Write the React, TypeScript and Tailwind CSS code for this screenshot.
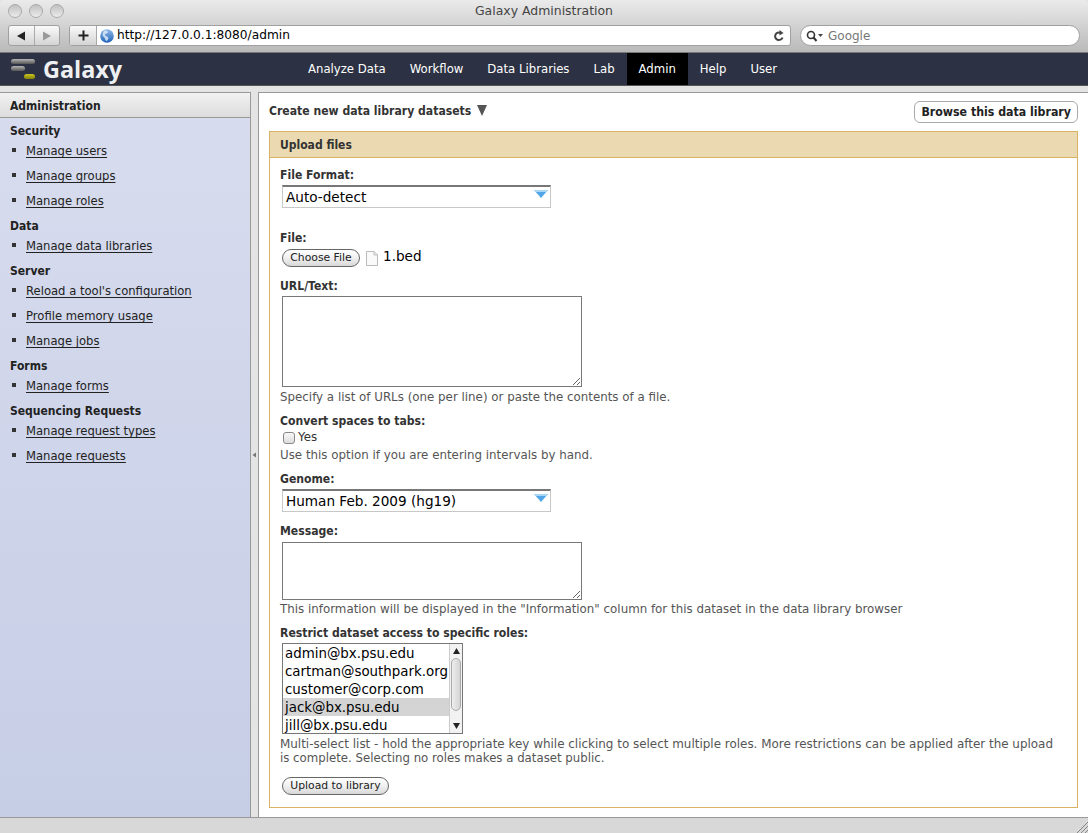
import React from "react";

const sidebar = [
  { title: "Security", links: ["Manage users", "Manage groups", "Manage roles"] },
  { title: "Data", links: ["Manage data libraries"] },
  { title: "Server", links: ["Reload a tool's configuration", "Profile memory usage", "Manage jobs"] },
  { title: "Forms", links: ["Manage forms"] },
  { title: "Sequencing Requests", links: ["Manage request types", "Manage requests"] },
];

const tabs = ["Analyze Data", "Workflow", "Data Libraries", "Lab", "Admin", "Help", "User"];

const roles = ["admin@bx.psu.edu", "cartman@southpark.org", "customer@corp.com", "jack@bx.psu.edu", "jill@bx.psu.edu"];

const Label = ({ children, className = "" }: { children: React.ReactNode; className?: string }) => (
  <div className={`h-[14px] text-[12.1px] leading-[14px] font-bold text-[#333] [font-family:'DejaVu_Sans_Condensed','DejaVu_Sans',sans-serif] ${className}`}>{children}</div>
);

const Help = ({ children, className = "" }: { children: React.ReactNode; className?: string }) => (
  <div className={`text-[11.85px] leading-[14px] text-[#555] ${className}`}>{children}</div>
);

// Safari style select with the blue arrow on the right
const FakeSelect = ({ value, className = "" }: { value: string; className?: string }) => (
  <div className={`relative ml-[2px] flex h-[23px] w-[269px] items-center border border-[#c8c8c8] border-t-2 border-t-[#777] pl-[3px] text-[13.6px] text-black ${className}`}>
    {value}
    <svg className="absolute right-[2px] top-[3px]" width="14" height="9" viewBox="0 0 14 9">
      <path d="M0 0H14L7 8Z" fill="#52a6e6" />
      <path d="M0 0H14L12.5 2H1.5Z" fill="#a9d6f5" />
    </svg>
  </div>
);

const AquaButton = ({ children, className = "" }: { children: React.ReactNode; className?: string }) => (
  <button className={`flex h-[18px] items-center justify-center rounded-full border border-[#666] bg-gradient-to-b from-white via-[#f0f0f0] to-[#d8d8d8] text-[10.8px] text-[#222] ${className}`}>
    {children}
  </button>
);

const TrafficLight = () => (
  <span className="h-[14px] w-[14px] rounded-full border border-[#aaa] bg-gradient-to-b from-[#c0c0c0] to-[#ececec]" />
);

export default function App() {
  return (
    <div className="flex h-[833px] w-[1088px] flex-col overflow-hidden bg-[#e4e4e4] text-[11.6px] [font-family:'DejaVu_Sans',sans-serif]">
      {/* browser chrome */}
      <div className="h-[52px] shrink-0 rounded-t-[5px] bg-gradient-to-b from-[#ebebeb] to-[#b9b9b9] px-2">
        <div className="relative flex h-[22px] items-center justify-center">
          <div className="absolute left-0 top-[4px] flex gap-[7px]">
            <TrafficLight />
            <TrafficLight />
            <TrafficLight />
          </div>
          <span className="text-[12.45px] text-[#444]">Galaxy Administration</span>
        </div>
        <div className="mt-[3px] flex h-[21px] items-center">
          <div className="flex h-[21px] w-[52px] rounded-[3px] border border-[#a0a0a0] bg-gradient-to-b from-[#fafafa] to-[#d4d4d4]">
            <div className="flex flex-1 items-center justify-center border-r border-[#a8a8a8]">
              <svg width="10" height="10" viewBox="0 0 10 10"><path d="M1 5L9 0.5V9.5Z" fill="#222" /></svg>
            </div>
            <div className="flex flex-1 items-center justify-center">
              <svg width="10" height="10" viewBox="0 0 10 10"><path d="M9 5L1 0.5V9.5Z" fill="#999" /></svg>
            </div>
          </div>
          <div className="ml-[9px] flex h-[21px] w-[722px] overflow-hidden rounded-[3px] border border-[#a0a0a0] bg-white">
            <div className="flex w-[27px] items-center justify-center border-r border-[#a8a8a8] bg-gradient-to-b from-[#fafafa] to-[#d4d4d4]">
              <svg width="11" height="11" viewBox="0 0 11 11"><path d="M4.5 0.5H6.5V4.5H10.5V6.5H6.5V10.5H4.5V6.5H0.5V4.5H4.5Z" fill="#222" /></svg>
            </div>
            <div className="flex flex-1 items-center pl-[3px] text-[12.2px] text-black">
              <svg className="mr-[3px]" width="14" height="14" viewBox="0 0 14 14">
                <defs>
                  <linearGradient id="globe" x1="0" y1="0" x2="0" y2="1">
                    <stop offset="0" stopColor="#8fb8e8" />
                    <stop offset="1" stopColor="#1f63b8" />
                  </linearGradient>
                </defs>
                <circle cx="7" cy="7" r="6.8" fill="url(#globe)" />
                <path d="M4 2C6 1 8 2 8 3.500C7 5 5 4 5 6C6 8 8 7 8.500 9C8 11 7 12 6 12C5 10 5 9 4 8C2.500 7 2 5 4 2Z" fill="#dbe9f7" opacity="0.85" />
              </svg>
              http://127.0.0.1:8080/admin
              <svg className="ml-auto mr-[5px]" width="12" height="12" viewBox="0 0 12 12" fill="none">
                <path d="M9.500 7.500A3.800 3.800 0 1 1 7.500 2.800" stroke="#444" strokeWidth="2" />
                <path d="M6.500 0L10.500 3L6.500 5.500Z" fill="#444" />
              </svg>
            </div>
          </div>
          <div className="ml-[9px] flex h-[21px] w-[280px] items-center rounded-full border border-[#a0a0a0] bg-white pl-[5px] text-[12px] text-[#777]">
            <svg width="18" height="12" viewBox="0 0 18 12" fill="none">
              <circle cx="5" cy="5" r="3.500" stroke="#333" strokeWidth="1.600" />
              <path d="M7.500 7.500L10.500 11" stroke="#333" strokeWidth="2" />
              <path d="M12 4H17L14.500 7Z" fill="#444" />
            </svg>
            <span className="ml-[4px]">Google</span>
          </div>
        </div>
      </div>

      {/* masthead */}
      <div className="relative flex h-[34px] shrink-0 items-center border-t border-[#777] border-b border-b-[#555] bg-[#2c3143]">
        <div className="flex w-[296px] shrink-0 items-center pl-[11px]">
          <svg width="25" height="24" viewBox="0 0 25 24">
            <defs>
              <linearGradient id="bar" x1="0" y1="0" x2="0" y2="1">
                <stop offset="0" stopColor="#b5b5b5" />
                <stop offset="1" stopColor="#555" />
              </linearGradient>
              <linearGradient id="yellow" x1="0" y1="0" x2="0" y2="1">
                <stop offset="0" stopColor="#c9c520" />
                <stop offset="1" stopColor="#85820a" />
              </linearGradient>
            </defs>
            <rect x="0" y="2" width="24" height="5" rx="2.500" fill="url(#bar)" />
            <rect x="0" y="9" width="14" height="5" rx="2.500" fill="url(#bar)" />
            <rect x="13" y="17" width="11" height="5" rx="2.500" fill="url(#yellow)" />
          </svg>
          <span className="ml-[7px] pt-[2px] text-[23.4px] font-bold text-[#eef0f2] [font-family:'Open_Sans',sans-serif]">Galaxy</span>
        </div>
        <div className="flex h-full">
          {tabs.map((t) => (
            <div key={t} className={`flex items-center px-3 pt-[2px] text-[11.7px] text-white ${t === "Admin" ? "bg-black" : ""}`}>
              {t}
            </div>
          ))}
        </div>
      </div>

      {/* panels */}
      <div className="flex min-h-0 flex-1 pt-[6px]">
        <div className="flex w-[251px] shrink-0 flex-col border-t border-r border-[#999] bg-gradient-to-b from-[#d8dcee] to-[#c6cee6]">
          <div className="flex h-[25px] shrink-0 items-center border-b border-[#999] bg-gradient-to-b from-[#f2f2f2] to-[#dcdcdc] pl-[10px] pt-[2px] text-[12px] font-bold text-[#222] [font-family:'DejaVu_Sans_Condensed','DejaVu_Sans',sans-serif]">
            Administration
          </div>
          <div className="pl-[10px] pt-[2px]">
            {sidebar.map((s) => (
              <div key={s.title}>
                <div className="flex h-[20px] items-center pt-[2px] text-[12px] font-bold text-[#222] [font-family:'DejaVu_Sans_Condensed','DejaVu_Sans',sans-serif]">{s.title}</div>
                {s.links.map((l) => (
                  <div key={l} className="flex h-[25px] items-start pt-[3px] text-[#222]">
                    <span className="mr-[10px] mt-[5px] ml-[2px] h-[4px] w-[4px] bg-[#333]" />
                    <a className="underline underline-offset-2">{l}</a>
                  </div>
                ))}
              </div>
            ))}
          </div>
        </div>

        <div className="flex w-[7px] shrink-0 items-center justify-center bg-[#e4e4e4]">
          <svg width="5" height="6" viewBox="0 0 5 6"><path d="M0.5 3L4 0.5V5.5Z" fill="#777" /></svg>
        </div>

        <div className="min-w-0 flex-1 border-t border-l border-[#999] bg-white pl-[10px] pr-[10px]">
          <div className="flex h-[38px] items-start justify-between">
            <div className="mt-[9px] flex items-center text-[12.1px] font-bold text-[#333] [font-family:'DejaVu_Sans_Condensed','DejaVu_Sans',sans-serif]">
              Create new data library datasets
              <svg className="mb-[2px] ml-[6px]" width="10" height="11" viewBox="0 0 10 11"><path d="M0 0H10L5 11Z" fill="#555" /></svg>
            </div>
            <a className="mt-[8px] flex h-[22px] items-center rounded-[6px] border border-[#aaa] px-[6px] text-[12.25px] font-bold text-[#222] [font-family:'DejaVu_Sans_Condensed','DejaVu_Sans',sans-serif]">Browse this data library</a>
          </div>

          <div className="h-[677px] border border-[#d8b365]">
            <div className="flex h-[26px] items-center border-b border-[#d8b365] bg-[#ebd9b2] pl-[10px] text-[12px] font-bold text-[#333] [font-family:'DejaVu_Sans_Condensed','DejaVu_Sans',sans-serif]">Upload files</div>
            <div className="pl-[10px]">
              <Label className="mt-[10px]">File Format:</Label>
              <FakeSelect value="Auto-detect" className="mt-[3px]" />
              <Label className="mt-[23px]">File:</Label>
              <div className="mt-[4px] flex h-[18px] items-center">
                <AquaButton className="ml-[2px] w-[78px]">Choose File</AquaButton>
                <svg className="ml-[6px]" width="12" height="15" viewBox="0 0 12 15" fill="none">
                  <path d="M0.5 0.5H8L11.500 4V14.500H0.5Z" fill="#fafafa" stroke="#bbb" />
                  <path d="M8 0.5V4H11.500" stroke="#bbb" />
                </svg>
                <span className="mb-[3px] ml-[5px] text-[13.6px] text-black">1.bed</span>
              </div>
              <Label className="mt-[12px]">URL/Text:</Label>
              <textarea className="ml-[2px] mt-[3px] block h-[91px] w-[300px] border border-[#777]" />
              <Help className="mt-[3px]">Specify a list of URLs (one per line) or paste the contents of a file.</Help>
              <Label className="mt-[10px]">Convert spaces to tabs:</Label>
              <div className="mt-[3px] flex h-[14px] items-center text-[11.85px] text-[#333]">
                <span className="ml-[3px] h-[12px] w-[12px] rounded-[3px] border border-[#888] bg-gradient-to-b from-[#f8f8f8] to-[#ddd]" />
                <span className="ml-[3px]">Yes</span>
              </div>
              <Help className="mt-[3px]">Use this option if you are entering intervals by hand.</Help>
              <Label className="mt-[10px]">Genome:</Label>
              <FakeSelect value="Human Feb. 2009 (hg19)" className="mt-[3px]" />
              <Label className="mt-[12px]">Message:</Label>
              <textarea className="ml-[2px] mt-[4px] block h-[58px] w-[300px] border border-[#777]" />
              <Help className="mt-[2px]">This information will be displayed in the "Information" column for this dataset in the data library browser</Help>
              <Label className="mt-[10px]">Restrict dataset access to specific roles:</Label>
              <div className="ml-[2px] mt-[3px] flex h-[91px] w-[181px] overflow-hidden border border-[#777] text-[13.4px] leading-[20px] text-black">
                <div className="min-w-0 flex-1">
                  {roles.map((r) => (
                    <div key={r} className={`h-[18px] whitespace-nowrap pl-[2px] ${r.startsWith("jack") ? "bg-[#d4d4d4]" : ""}`}>
                      {r}
                    </div>
                  ))}
                </div>
                <div className="flex w-[13px] shrink-0 flex-col items-center border-l border-[#ccc] bg-[#f2f2f2]">
                  <svg className="mt-[4px]" width="7" height="6" viewBox="0 0 7 6"><path d="M3.500 0L7 6H0Z" fill="#222" /></svg>
                  <div className="mt-[4px] h-[53px] w-[10px] rounded-full border border-[#aaa] bg-gradient-to-r from-[#eee] to-[#d4d4d4]" />
                  <svg className="mt-auto mb-[4px]" width="7" height="6" viewBox="0 0 7 6"><path d="M3.500 6L7 0H0Z" fill="#222" /></svg>
                </div>
              </div>
              <Help className="mt-[3px]">
                <span className="text-[11.95px]">Multi-select list - hold the appropriate key while clicking to select multiple roles. More restrictions can be applied after the upload</span>
                <br />
                <span className="text-[11.75px]">is complete. Selecting no roles makes a dataset public.</span>
              </Help>
              <AquaButton className="ml-[2px] mt-[12px] w-[107px]">Upload to library</AquaButton>
            </div>
          </div>
        </div>
      </div>

      {/* status bar */}
      <div className="relative h-[16px] shrink-0 border-t border-[#999] bg-[#d8d8d8]">
        <svg className="absolute bottom-0 right-0" width="12" height="12" viewBox="0 0 12 12" stroke="#888" fill="none">
          <path d="M1 12L12 1M5 12L12 5M9 12L12 9" />
        </svg>
      </div>
    </div>
  );
}
